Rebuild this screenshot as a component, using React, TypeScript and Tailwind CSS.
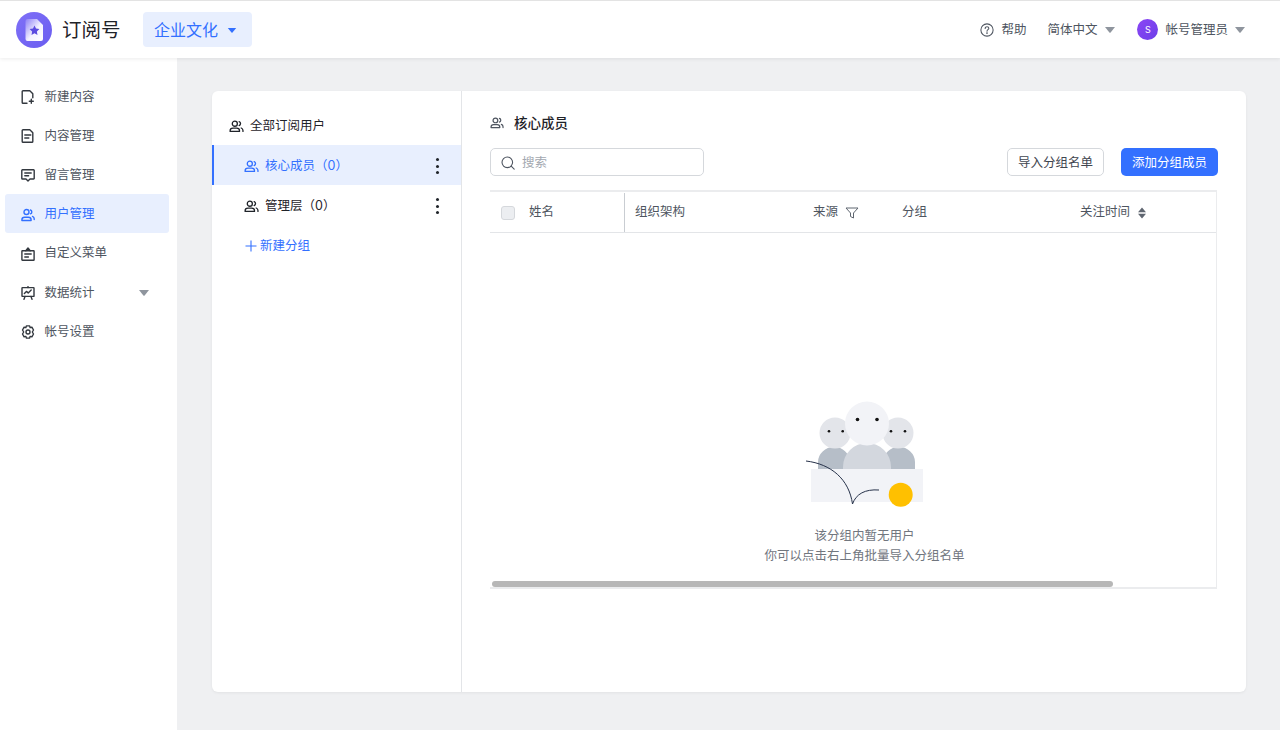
import React from "react";

const Users = ({ className = "" }: { className?: string }) => (
  <svg viewBox="0 0 16 16" fill="none" stroke="currentColor" strokeWidth="1.400" className={className}>
    <circle cx="6.200" cy="5" r="2.700" />
    <path d="M1.200 13.200v-.6c0-1.700 1.300-2.800 3-2.800h4c1.700 0 3 1.100 3 2.800v.6z" strokeLinejoin="round" />
    <path d="M10.800 2.800c1 .3 1.500 1.100 1.500 2.100s-.5 1.800-1.500 2.100M13 9.600c1.200.4 1.900 1.400 1.900 2.600v1" strokeLinecap="round" />
  </svg>
);

const Caret = ({ className = "" }: { className?: string }) => (
  <svg viewBox="0 0 10 6" className={className} fill="currentColor">
    <path d="M0 0h10L5.600 5.500a.8.8 0 0 1-1.200 0z" />
  </svg>
);

const NavIcon = ({ kind }: { kind: string }) => {
  const p = { fill: "none", stroke: "currentColor", strokeWidth: 1.4, strokeLinejoin: "round" as const, strokeLinecap: "round" as const };
  return (
    <svg viewBox="0 0 14 14" className={`w-[14px] h-[14px] shrink-0 ${kind === "users" ? "" : "text-[#33383f]"}`} {...p}>
      {kind === "new" && (
        <>
          <path d="M6 13.200H2a.8.8 0 0 1-.8-.8V1.600A.8.8 0 0 1 2 .8h6.800l3 3v4" />
          <path d="M10.300 9.300v4M8.300 11.300h4" />
        </>
      )}
      {kind === "doc" && (
        <>
          <path d="M2 .8h6.800l3 3v8.600a.8.8 0 0 1-.8.8H2a.8.8 0 0 1-.8-.8V1.600A.8.8 0 0 1 2 .8z" />
          <path d="M3.800 6h6M3.800 9h4" />
        </>
      )}
      {kind === "msg" && (
        <>
          <path d="M1.400 1.800h11.200a.6.6 0 0 1 .6.600v8a.6.6 0 0 1-.6.600H9l-2 1.900L5 11H1.400a.6.6 0 0 1-.6-.6v-8a.6.6 0 0 1 .6-.6z" />
          <path d="M3.800 5h6.400M3.800 7.800h3.800" />
        </>
      )}
      {kind === "users" && (
        <>
          <circle cx="5.500" cy="4" r="2.500" />
          <path d="M.9 12.500v-.7c0-1.500 1.200-2.500 2.700-2.500h3.800c1.500 0 2.700 1 2.700 2.500v.7z" />
          <path d="M9.500 2c.9.300 1.300 1 1.300 1.900S10.400 5.500 9.500 5.800M11.500 8.400c1 .4 1.700 1.200 1.700 2.300v.9" />
        </>
      )}
      {kind === "menu" && (
        <>
          <rect x=".9" y="3.800" width="12.200" height="9.400" rx=".5" />
          <path d="M4.800 3.800 7 1l2.200 2.800M3.800 7h6.400M3.800 10h3.600" />
        </>
      )}
      {kind === "chart" && (
        <>
          <rect x="1" y="1.600" width="12" height="8.800" rx=".5" />
          <path d="m3.400 7.400 2-2 1.800 1.500 3-2.800M4 10.400l-1 2.900M10 10.400l1 2.900M7 .6v1" />
        </>
      )}
      {kind === "gear" && (
        <>
          <path d="M5.400.9h3.200l.5 1.700 1.800-.4L12.500 5l-1.200 2 1.200 2-1.600 2.800-1.800-.4-.5 1.700H5.400l-.5-1.700-1.800.4L1.500 9l1.200-2-1.200-2 1.600-2.800 1.800.4z" />
          <circle cx="7" cy="7" r="2" />
        </>
      )}
    </svg>
  );
};

const nav = [
  ["new", "新建内容"],
  ["doc", "内容管理"],
  ["msg", "留言管理"],
  ["users", "用户管理"],
  ["menu", "自定义菜单"],
  ["chart", "数据统计"],
  ["gear", "帐号设置"],
];

const Dots = () => (
  <span className="ml-auto mr-[22px] flex flex-col gap-[3.500px] text-[#1f2329]">
    <i className="block w-[3px] h-[3px] rounded-full bg-current" />
    <i className="block w-[3px] h-[3px] rounded-full bg-current" />
    <i className="block w-[3px] h-[3px] rounded-full bg-current" />
  </span>
);

const Empty = () => (
  <svg viewBox="0 0 150 125" className="w-[150px] h-[125px]">
    <path d="M28 79V72a16 15 0 0 1 32 0v7zM93 79V72a16 15 0 0 1 32 0v7z" fill="#b6bec8" />
    <circle cx="45" cy="43" r="15.500" fill="#e3e5ea" />
    <circle cx="108" cy="43" r="15.500" fill="#e3e5ea" />
    <path d="M53 79V77a24 24 0 0 1 48 0v2z" fill="#d3d7de" />
    <circle cx="77" cy="33.500" r="22" fill="#f2f3f7" />
    <rect x="21" y="79" width="112" height="33" fill="#f2f3f7" />
    <circle cx="110.700" cy="104.700" r="12" fill="#ffc000" />
    <path d="M16 71c25 3 43 18 46.500 43C66 104 75 99 89 100" fill="none" stroke="#27324a" strokeWidth="1" />
    <g fill="#111">
      <circle cx="67.500" cy="29.500" r="1.800" />
      <circle cx="87" cy="29.500" r="1.800" />
      <circle cx="39" cy="41.300" r="1.300" />
      <circle cx="52.700" cy="41.300" r="1.300" />
      <circle cx="101" cy="41.300" r="1.300" />
      <circle cx="115" cy="41.300" r="1.300" />
    </g>
  </svg>
);

export default function App() {
  return (
    <div
      className="w-[1280px] h-[730px] flex flex-col overflow-hidden bg-[#eff0f2] text-[12.500px] text-[#4e5560]"
      style={{ fontFamily: 'Inter, "Noto Sans CJK SC", sans-serif' }}
    >
      <header className="relative z-10 h-[58px] shrink-0 flex items-center bg-white border-t border-[#e3e3e3] shadow-[0_1px_4px_rgba(0,0,0,0.08)]">
        <div className="ml-[16px] w-[36px] h-[36px] rounded-full bg-gradient-to-br from-[#7f70f7] to-[#6a5cf0] flex items-center justify-center">
          <svg viewBox="0 0 19 24" className="w-[19px] h-[24px]">
            <defs>
              <linearGradient id="docg" x1="0" y1="0" x2="1" y2="1">
                <stop offset="0" stopColor="#8d80f6" />
                <stop offset=".55" stopColor="#f3f1ff" />
                <stop offset="1" stopColor="#ffffff" />
              </linearGradient>
            </defs>
            <path d="M2.500 1h9.500L18 7v14a2 2 0 0 1-2 2H2.500a2 2 0 0 1-2-2V3a2 2 0 0 1 2-2z" fill="url(#docg)" />
            <path d="m9.500 7.500 1.500 3.100 3.400.5-2.500 2.400.6 3.400-3-1.600-3 1.600.6-3.400-2.500-2.400 3.400-.5z" fill="#5b4be0" />
          </svg>
        </div>
        <span className="ml-[10px] pt-[2px] text-[19.500px] text-[#1f2329]">订阅号</span>
        <button className="ml-[22.500px] w-[109px] h-[35px] pt-[1px] rounded-[4px] bg-[#e8effe] text-[#3370ff] text-[16px] flex items-center pl-[11px]">
          企业文化
          <Caret className="ml-[9px] w-[10px] h-[5px]" />
        </button>
        <div className="ml-auto flex items-center">
          <svg viewBox="0 0 16 16" className="w-[14px] h-[14px]" fill="none" stroke="#4e5560" strokeWidth="1.200">
            <circle cx="8" cy="8" r="7" />
            <path d="M5.900 6.200c0-1.200 1-2 2.100-2s2.100.8 2.100 1.900c0 1.500-2.100 1.600-2.100 3.200" strokeLinecap="round" />
            <circle cx="8" cy="11.500" r=".4" />
          </svg>
          <span className="ml-[7px] pt-[2px]">帮助</span>
          <span className="ml-[21px] pt-[2px]">简体中文</span>
          <Caret className="ml-[8px] w-[10px] h-[6px] text-[#8f959e]" />
          <span className="ml-[22px] w-[21px] h-[21px] rounded-full bg-gradient-to-br from-[#8b46f5] to-[#6d3fe8] text-white text-[9px] flex items-center justify-center">
            S
          </span>
          <span className="ml-[7px] pt-[2px]">帐号管理员</span>
          <Caret className="ml-[7px] w-[10px] h-[6px] text-[#8f959e] mr-[35px]" />
        </div>
      </header>

      <div className="flex-1 flex min-h-0">
        <aside className="w-[177px] shrink-0 bg-white pl-[5px] pr-[8px] pt-[18.500px]">
          {nav.map(([k, t], i) => {
            const active = i === 3;
            return (
              <div
                key={k}
                className={`h-[39.200px] pt-[2px] rounded-[3px] pl-[16px] flex items-center gap-[9.500px] ${active ? "bg-[#e8effe] text-[#3370ff]" : ""}`}
              >
                <NavIcon kind={k} />
                <span>{t}</span>
                {k === "chart" && <Caret className="ml-auto mr-[20px] w-[10px] h-[6px] text-[#8f959e]" />}
              </div>
            );
          })}
        </aside>

        <main className="flex-1 pl-[35px] pr-[34px] pt-[33px] pb-[38px] min-w-0">
          <div className="h-full bg-white rounded-[6px] shadow-[0_1px_3px_rgba(0,0,0,0.06)] flex overflow-hidden">
            <div className="w-[250px] shrink-0 border-r border-[#e3e5e8] pt-[14px]">
              <div className="h-[40px] pt-[2px] pl-[17px] flex items-center gap-[6px] text-[#1f2329]">
                <Users className="w-[15px] h-[15px]" />
                全部订阅用户
              </div>
              <div className="h-[40px] pt-[2px] pl-[30px] flex items-center gap-[6px] bg-[#e8effe] text-[#3370ff] border-l-2 border-[#3370ff]">
                <Users className="w-[15px] h-[15px]" />
                <span>核心成员（0）</span>
                <Dots />
              </div>
              <div className="h-[40px] pt-[2px] pl-[32px] flex items-center gap-[6px] text-[#1f2329]">
                <Users className="w-[15px] h-[15px]" />
                <span>管理层（0）</span>
                <Dots />
              </div>
              <div className="h-[40px] pt-[2px] pl-[33px] flex items-center gap-[3px] text-[#3370ff]">
                <svg viewBox="0 0 12 12" className="w-[12px] h-[12px]" fill="none" stroke="currentColor" strokeWidth="1.100">
                  <path d="M6 .5v11M.5 6h11" />
                </svg>
                新建分组
              </div>
            </div>

            <div className="flex-1 min-w-0 pl-[28px] pr-[28px]">
              <div className="h-[22px] mt-[21px] flex items-center gap-[10px] text-[13.500px] text-[#1f2329] font-medium">
                <Users className="w-[14px] h-[14px] text-[#4e5560]" />
                核心成员
              </div>
              <div className="mt-[14px] flex items-center">
                <div className="w-[214px] h-[28px] pt-[2px] rounded-[5px] border border-[#d5d8dc] flex items-center pl-[10px] gap-[7px] text-[#a3a8b0]">
                  <svg viewBox="0 0 14 14" className="w-[14px] h-[14px]" fill="none" stroke="#4e5560" strokeWidth="1.100">
                    <circle cx="6.300" cy="6.300" r="5.300" />
                    <path d="m10.200 10.200 3 3" strokeLinecap="round" />
                  </svg>
                  搜索
                </div>
                <button className="ml-auto w-[97px] h-[28px] pt-[2px] rounded-[5px] border border-[#d5d8dc] text-[#3f4650]">导入分组名单</button>
                <button className="ml-[17px] w-[97px] h-[28px] pt-[2px] rounded-[5px] bg-[#3370ff] text-white">添加分组成员</button>
              </div>

              <div className="relative mt-[14px] mr-[1px] h-[399px] border-t-2 border-b-2 border-r border-[#ebecee] flex flex-col">
                <div className="h-[41px] pt-[1px] shrink-0 flex items-center border-b border-[#e3e5e8]">
                  <div className="w-[135px] h-full shrink-0 flex items-center pl-[11px] border-r border-[#c9cdd2]">
                    <span className="w-[14px] h-[14px] rounded-[3px] border border-[#d5d8dc] bg-[#eceef1]" />
                    <span className="ml-[14px]">姓名</span>
                  </div>
                  <span className="ml-[10px] w-[178px]">组织架构</span>
                  <span>来源</span>
                  <svg viewBox="0 0 14 14" className="ml-[7px] w-[14px] h-[14px]" fill="none" stroke="#5f6670" strokeWidth="1">
                    <path d="M1 2h12L8.500 7v5L5.500 10.500V7z" strokeLinejoin="round" />
                  </svg>
                  <span className="ml-[43px] w-[178px]">分组</span>
                  <span>关注时间</span>
                  <svg viewBox="0 0 8 12" className="ml-[8px] w-[8px] h-[12px]" fill="#5f6670">
                    <path d="M4 .5l4 4.700H0zM4 11.500 0 6.800h8z" />
                  </svg>
                </div>
                <div className="flex flex-col items-center pl-[23px] pt-[157px]">
                  <Empty />
                  <p className="mt-[11px] leading-[20px] text-center text-[#71767e]">
                    该分组内暂无用户
                    <br />
                    你可以点击右上角批量导入分组名单
                  </p>
                </div>
                <div className="absolute left-[2px] bottom-[0px] w-[621px] h-[6px] rounded-full bg-[#b7b7b7]" />
              </div>
            </div>
          </div>
        </main>
      </div>
    </div>
  );
}
